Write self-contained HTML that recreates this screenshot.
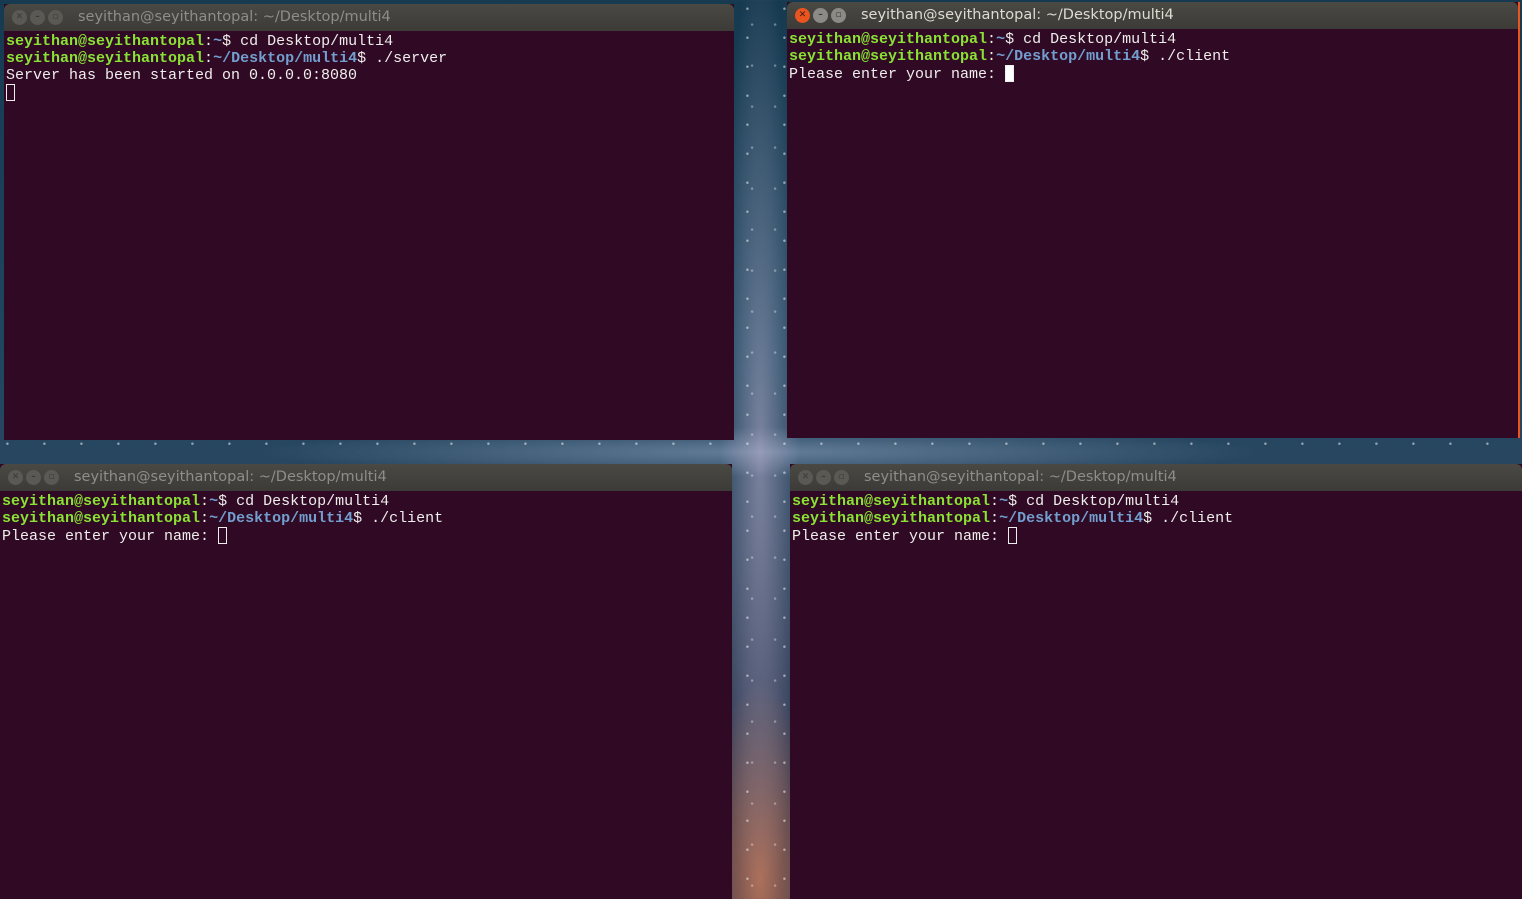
<!DOCTYPE html>
<html><head><meta charset="utf-8"><style>
html,body{margin:0;padding:0;width:1522px;height:899px;overflow:hidden;}
body{position:relative;
background:
radial-gradient(circle at 20% 30%, rgba(255,255,255,.5) 0 1px, transparent 1.5px) 0 0/37px 29px,
radial-gradient(circle at 70% 60%, rgba(255,255,255,.35) 0 1px, transparent 1.5px) 0 0/23px 41px,
radial-gradient(ellipse 40px 500px at 760px 450px, rgba(190,180,210,.55), rgba(0,0,0,0) 100%),
radial-gradient(ellipse 500px 25px at 760px 452px, rgba(160,180,210,.5), rgba(0,0,0,0) 100%),
radial-gradient(ellipse 60px 200px at 760px 880px, rgba(200,120,80,.8), rgba(0,0,0,0) 100%),
linear-gradient(180deg,#163a50 0%,#1f4760 40%,#30465f 60%,#353550 100%);}
.win{position:absolute;background:#300a24;}
.tb{position:absolute;left:0;right:0;top:0;height:27px;background:linear-gradient(#4a4944,#3c3b37);border-radius:6px 6px 0 0;}
.tt{position:absolute;left:74px;top:5px;font:14.5px "DejaVu Sans","Liberation Sans",sans-serif;color:#8f8d87;white-space:nowrap;}
.act .tt{color:#dfdbd2;}
.btn{position:absolute;top:6px;width:15px;height:15px;border-radius:50%;background:#5a5954;color:#3c3b37;font:bold 9px/15px "DejaVu Sans",sans-serif;text-align:center;}
.act .b1{background:#e9541f;color:#3a1b10;}
.act .b2,.act .b3{background:#8c8a85;}
.body{position:absolute;left:0;right:0;top:27px;bottom:0;padding:2px 2px;font:15px/17px "Liberation Mono","DejaVu Sans Mono",monospace;color:#eeeeec;white-space:pre;}
.g{color:#8ae234;font-weight:bold}.bl{color:#729fcf;font-weight:bold}
.cur{display:inline-block;width:9px;height:17px;border:1px solid #eee;box-sizing:border-box;vertical-align:-4px;}
.cur.f{background:#fff;}
</style></head><body>

<div class="win" style="left:4px;top:4px;width:730px;height:436px;">
<div class="tb"><span class="btn b1" style="left:8px">✕</span><span class="btn b2" style="left:26px">–</span><span class="btn b3" style="left:44px">▫</span><span class="tt">seyithan@seyithantopal: ~/Desktop/multi4</span></div>
<div class="body"><span class="g">seyithan@seyithantopal</span>:<span class="bl">~</span>$ cd Desktop/multi4
<span class="g">seyithan@seyithantopal</span>:<span class="bl">~/Desktop/multi4</span>$ ./server
Server has been started on 0.0.0.0:8080
<span class="cur"></span></div></div>

<div class="win act" style="left:787px;top:2px;width:731px;height:436px;border-right:2px solid #e9541f;">
<div class="tb"><span class="btn b1" style="left:8px">✕</span><span class="btn b2" style="left:26px">–</span><span class="btn b3" style="left:44px">▫</span><span class="tt">seyithan@seyithantopal: ~/Desktop/multi4</span></div>
<div class="body"><span class="g">seyithan@seyithantopal</span>:<span class="bl">~</span>$ cd Desktop/multi4
<span class="g">seyithan@seyithantopal</span>:<span class="bl">~/Desktop/multi4</span>$ ./client
Please enter your name: <span class="cur f"></span></div></div>

<div class="win" style="left:0px;top:464px;width:732px;height:440px;">
<div class="tb"><span class="btn b1" style="left:8px">✕</span><span class="btn b2" style="left:26px">–</span><span class="btn b3" style="left:44px">▫</span><span class="tt">seyithan@seyithantopal: ~/Desktop/multi4</span></div>
<div class="body"><span class="g">seyithan@seyithantopal</span>:<span class="bl">~</span>$ cd Desktop/multi4
<span class="g">seyithan@seyithantopal</span>:<span class="bl">~/Desktop/multi4</span>$ ./client
Please enter your name: <span class="cur"></span></div></div>

<div class="win" style="left:790px;top:464px;width:732px;height:440px;">
<div class="tb"><span class="btn b1" style="left:8px">✕</span><span class="btn b2" style="left:26px">–</span><span class="btn b3" style="left:44px">▫</span><span class="tt">seyithan@seyithantopal: ~/Desktop/multi4</span></div>
<div class="body"><span class="g">seyithan@seyithantopal</span>:<span class="bl">~</span>$ cd Desktop/multi4
<span class="g">seyithan@seyithantopal</span>:<span class="bl">~/Desktop/multi4</span>$ ./client
Please enter your name: <span class="cur"></span></div></div>

</body></html>
